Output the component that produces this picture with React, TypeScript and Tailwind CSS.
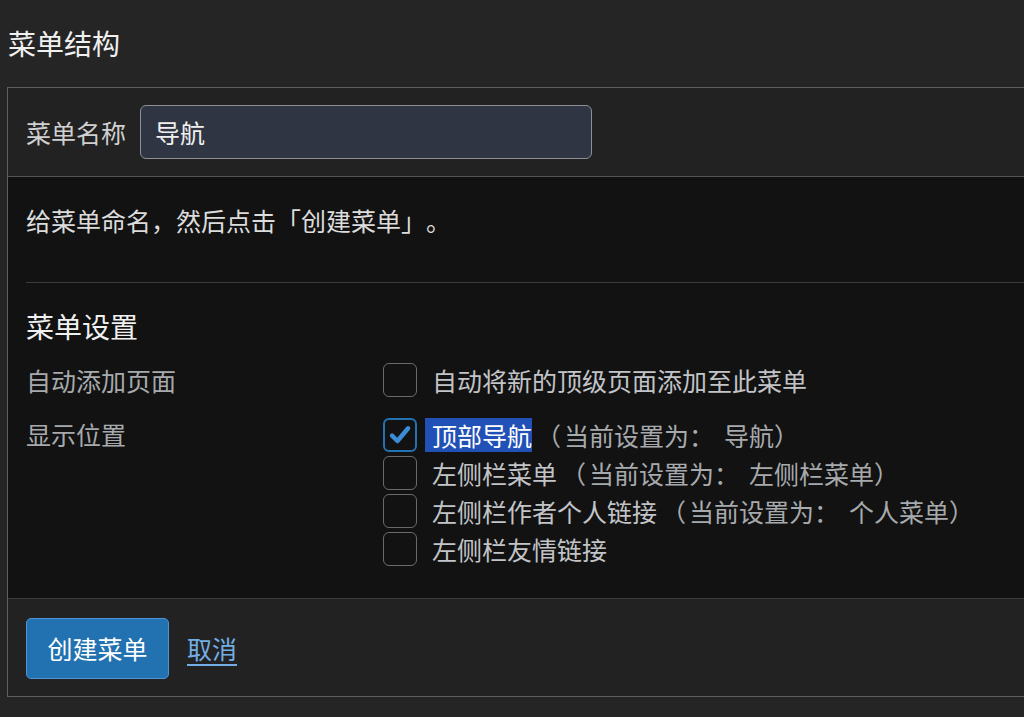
import React from "react";

const font = { fontFamily: '"Noto Sans CJK SC", "Noto Sans", sans-serif' };

function Checkbox({ checked }: { checked?: boolean }) {
  return (
    <span
      className={`flex h-[34px] w-[34px] shrink-0 items-center justify-center rounded-[6px] ${
        checked ? "border-2 border-[#2271b1]" : "border-[1.5px] border-[#6a6a6a]"
      }`}
    >
      {checked && (
        <svg viewBox="0 0 20 20" className="h-[28px] w-[28px]">
          <path
            d="M4.3 10.4 L8.2 14.3 L15.8 5.2"
            fill="none"
            stroke="#3b8bd6"
            strokeWidth="3.2"
            strokeLinecap="round"
            strokeLinejoin="round"
          />
        </svg>
      )}
    </span>
  );
}

const locations = [
  { name: "顶部导航", current: "导航", checked: true },
  { name: "左侧栏菜单", current: "左侧栏菜单" },
  { name: "左侧栏作者个人链接", current: "个人菜单" },
  { name: "左侧栏友情链接" },
];

export default function App() {
  return (
    <div
      className="h-[717px] w-full overflow-hidden bg-[#252525] pt-[25px] text-[25px] text-[#c3c4c7] [text-spacing-trim:space-all]"
      style={font}
    >
      <h2 className="pl-[8px] text-[28px] leading-[36px] text-[#f0f0f0]">菜单结构</h2>

      <div className="ml-[7px] mt-[26px] w-[1040px] border border-[#5f5f5f]">
        <div className="flex items-center border-b border-[#555] bg-[#222] py-[17px] pl-[18px]">
          <label className="w-[114px] leading-[36px] text-[#d0d0d0]">菜单名称</label>
          <input
            readOnly
            value="导航"
            className="h-[54px] w-[452px] rounded-[6px] border border-[#8c8f94] bg-[#2f3542] px-[14px] text-[25px] text-[#f0f0f0] outline-none"
            style={font}
          />
        </div>

        <div className="bg-[#121212] px-[18px] pb-[32px] pt-[25px]">
          <p className="leading-[36px] text-[#dcdcdc]">给菜单命名，然后点击「创建菜单」。</p>
          <div className="mt-[44px] h-px bg-[#3c3c3c]" />
          <h3 className="mt-[25px] text-[28px] leading-[36px] text-[#f0f0f0]">菜单设置</h3>

          <div className="mt-[19px] flex h-[34px] items-center">
            <span className="w-[357px] leading-[36px] text-[#a7aaad]">自动添加页面</span>
            <Checkbox />
            <span className="pl-[15px] leading-[34px] text-[#c3c4c7]">
              自动将新的顶级页面添加至此菜单
            </span>
          </div>

          <div className="mt-[21px] flex items-start">
            <span className="flex h-[34px] w-[357px] items-center text-[#a7aaad]">显示位置</span>
            <div className="flex flex-col gap-[4px]">
              {locations.map((l) => (
                <div key={l.name} className="flex h-[34px] items-center">
                  <Checkbox checked={l.checked} />
                  <span
                    className={`ml-[8px] pl-[7px] leading-[34px] ${
                      l.checked ? "bg-[#2151b6] text-white" : "text-[#c3c4c7]"
                    }`}
                  >
                    {l.name}
                  </span>
                  {l.current && (
                    <span className="pl-[7px] leading-[34px] text-[#a7aaad]">
                      <span className="inline-block -translate-x-[3px]">（</span>
                      当前设置为：
                      <span className="pl-[10px]">{l.current}</span>）
                    </span>
                  )}
                </div>
              ))}
            </div>
          </div>
        </div>

        <div className="flex items-center gap-[18px] border-t border-[#3a3a3a] bg-[#222] pb-[17px] pl-[18px] pt-[19px]">
          <button
            type="button"
            className="h-[61px] w-[143px] rounded-[5px] border border-[#4f94d4] bg-[#2271b1] text-[25px] text-white"
            style={font}
          >
            创建菜单
          </button>
          <a href="#" className="text-[#72aee6] underline underline-offset-[5px]">
            取消
          </a>
        </div>
      </div>
    </div>
  );
}
